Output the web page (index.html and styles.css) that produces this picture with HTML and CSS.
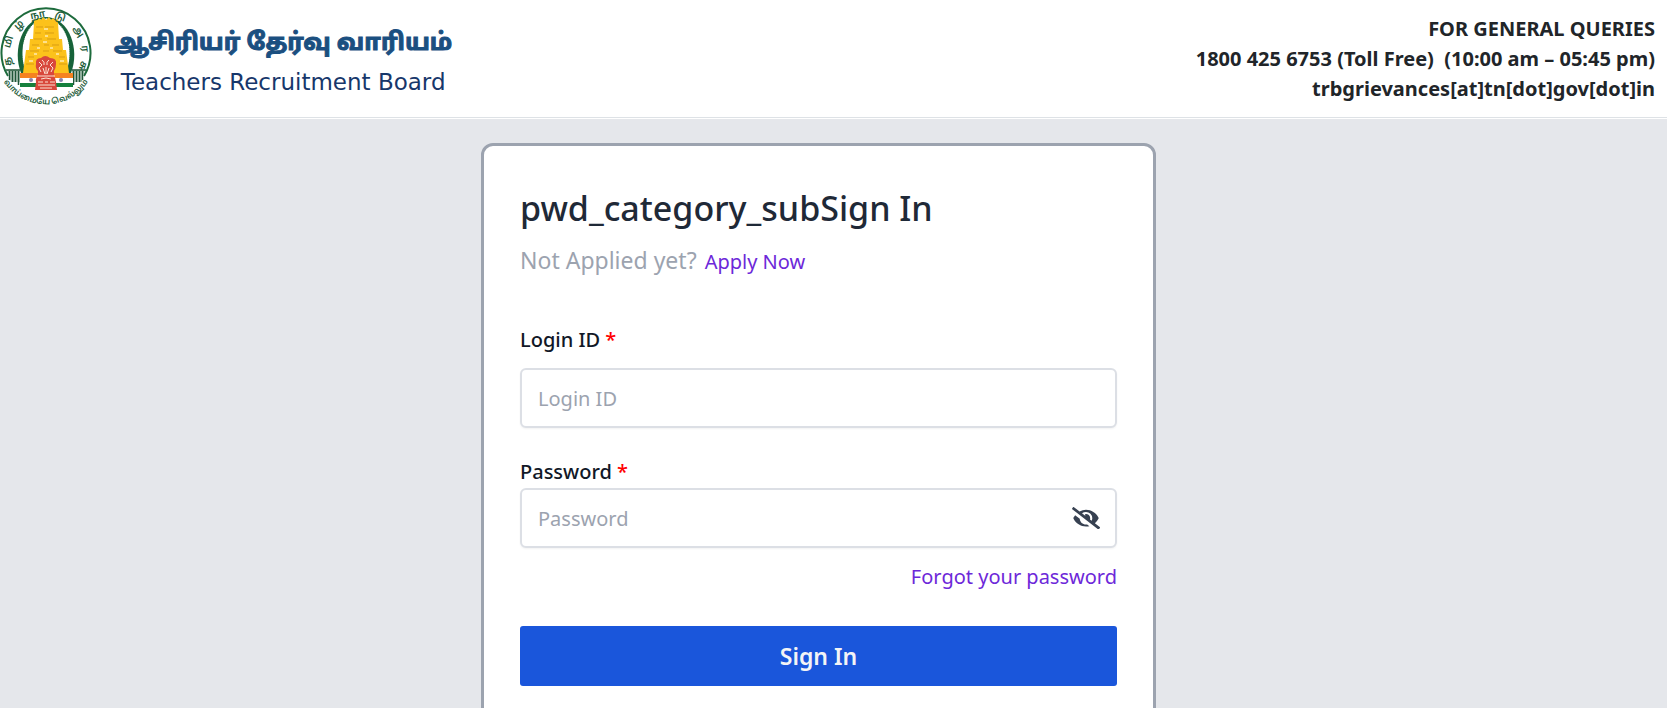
FILE: index.html
```html
<!DOCTYPE html>
<html lang="en">
<head>
  <meta charset="UTF-8" />
  <meta name="viewport" content="width=device-width, initial-scale=1.0"/>
  <title>Teachers Recruitment Board - Sign In</title>
  <link rel="stylesheet" href="styles.css">
</head>
<body>

<!-- Header -->
<header class="site-header">
  <div class="brand">
    <svg class="emblem" viewBox="0 4 92 109" role="img" aria-label="Government of Tamil Nadu emblem">
      <defs>
        <path id="arcTop" d="M12 65 A36 36 0 1 1 80 65"/>
        <path id="arcBottom" d="M2 79 A51 51 0 0 0 90 79"/>
      </defs>
      <path d="M8 76 A44.500 44.500 0 1 1 84 76" fill="none" stroke="#1d6b3c" stroke-width="2"/>
      <!-- inner ring -->
      <path d="M21 73 C12 50 22 18 46 17 C70 18 80 50 71 73 Z" fill="#17633a"/>
      <path d="M26 73 C17 50 25 20 46 18 C67 20 75 50 66 73 Z" fill="#fff"/>
      <path d="M25 73 C16 50 24 20 46 18 C68 20 76 50 67 73" fill="none" stroke="#17633a" stroke-width="2" stroke-dasharray="1 1"/>
      <!-- temple tower -->
      <path d="M34 23 v-4 l3 1 2 -2 2 2 2 -3 3 3 3 -3 2 3 2 -2 2 2 3 -1 v4 l1 16 h3 l1 11 h3 l3 23 H23 l3 -23 h3 l1 -11 h3 z" fill="#fcc21b"/>
      <path d="M36 27h7m2 0h9M35 33h6m4 0h9M34 39h8m5 0h9M32 45h7m5 0h5m3 0h7M30 51h9m4 0h6m4 0h9M28 57h6m25 0h6M26 64h8m25 0h8" stroke="#d99d12" stroke-width="1"/>
      <path d="M44 29h4M45 36h3M43 42h4M37 48h3M50 48h3M34 54h3M56 54h3M29 61h4M60 61h4" stroke="#fff" stroke-width="1"/>
      <!-- side walls -->
      <path d="M7 70h13v12h-9zM72 70h13l-4 12h-9z" fill="#b8cdbf"/>
      <path d="M6 70h14M72 70h14M9.500 71v9M12.500 71v11M15.500 71v11M18.500 71v14M73.500 71v14M76.500 71v11M79.500 71v11M82.500 71v9" stroke="#1f5638" stroke-width="1.500" fill="none"/>
      <!-- flag -->
      <path d="M20 73h53v5H20z" fill="#f58220"/>
      <path d="M20 78h53v5H20z" fill="#fff"/>
      <path d="M20 83h53v4H20z" fill="#15803d"/>
      <circle cx="31" cy="80" r="2" fill="#8580ad"/>
      <circle cx="61" cy="80" r="2" fill="#8580ad"/>
      <!-- lion capital -->
      <path d="M41 58 q4 -4 9 0 q7 0 6 6 q0 4 -2 7 v4 h-1 q3 3 3 7 l1 8 H35 l1 -8 q-1 -4 3 -7 h-1 v-4 q-3 -3 -2 -7 q-1 -6 5 -6z" fill="#d8483c"/>
      <path d="M42 60q3 2 2 5M49 60q-3 2 -2 5M39 62l3 3-3 3 2 4M53 62l-3 3 3 3-2 4M46 67v7M43 68l2 6M49 68l-2 6M37 76h18M41 79q5 -2 10 0M38 82h5m2 0h3m2 0h5M38 85h17M40 88h12" stroke="#fbe3d4" stroke-width="1" fill="none"/>
      <text class="emblem-top"><textPath href="#arcTop">த   மி   ழ்   நா   டு    அ   ர   சு</textPath></text>
      <text class="emblem-bottom"><textPath href="#arcBottom" startOffset="50%" text-anchor="middle">வாய்மையே வெல்லும்</textPath></text>
    </svg>
    <div class="brand-text">
      <span class="brand-tamil" lang="ta">ஆசிரியர் தேர்வு வாரியம்</span>
      <span class="brand-english">Teachers Recruitment Board</span>
    </div>
  </div>
  <div class="queries">
    <p>FOR GENERAL QUERIES</p>
    <p>1800 425 6753 (Toll Free)&nbsp; (10:00 am – 05:45 pm)</p>
    <p>trbgrievances[at]tn[dot]gov[dot]in</p>
  </div>
</header>

<!-- Login -->
<main class="page">
  <form class="card">
    <h1>pwd_category_subSign In</h1>
    <p class="apply">Not Applied yet? <a href="#">Apply Now</a></p>

    <div class="field field-login">
      <label for="loginId">Login ID <span class="required">*</span></label>
      <input type="text" id="loginId" placeholder="Login ID">
    </div>

    <div class="field">
      <label for="password">Password <span class="required">*</span></label>
      <div class="password-box">
        <input type="password" id="password" placeholder="Password">
        <button type="button" class="toggle" aria-label="Show password">
          <svg viewBox="0 0 640 512" fill="currentColor">
            <path d="M320 400c-75.870 0-137.250-58.710-142.900-133.110L72.200 185.820c-13.790 17.300-26.480 35.590-36.720 55.590a32.350 32.350 0 0 0 0 29.190C89.710 376.410 197.070 448 320 448c26.910 0 52.870-4 77.890-10.460L346 397.390a144.130 144.130 0 0 1-26 2.610zm313.820 58.100l-110.550-85.440a331.250 331.250 0 0 0 81.250-102.070 32.350 32.350 0 0 0 0-29.190C550.290 135.590 442.930 64 320 64a308.150 308.150 0 0 0-147.320 37.700L45.460 3.370A16 16 0 0 0 23 6.180L3.370 31.450A16 16 0 0 0 6.180 53.900l588.360 454.730a16 16 0 0 0 22.460-2.810l19.640-25.270a16 16 0 0 0-2.820-22.450zm-183.720-142l-39.300-30.380A94.750 94.750 0 0 0 416 256a94.760 94.760 0 0 0-121.310-92.210A47.650 47.650 0 0 1 304 192a46.640 46.640 0 0 1-1.540 10l-73.610-56.890A142.310 142.310 0 0 1 320 112a143.920 143.920 0 0 1 144 144c0 21.630-5.290 41.790-13.900 60.110z"/>
          </svg>
        </button>
      </div>
    </div>

    <a class="forgot" href="#">Forgot your password</a>
    <button type="submit" class="submit">Sign In</button>
  </form>
</main>

</body>
</html>
```
FILE: styles.css
```css
* {
  box-sizing: border-box;
}

body {
  margin: 0;
  min-height: 100vh;
  background: #e5e7eb;
  font-family: "Noto Sans", "Open Sans", sans-serif;
  font-size: 20px;
  line-height: 30px;
  color: #212529;
  overflow-x: hidden;
}

h1,
p {
  margin: 0;
}

a {
  color: #6d28d9;
  text-decoration: none;
}

/* Header */
.site-header {
  display: flex;
  justify-content: space-between;
  align-items: center;
  padding: 4px 12px 4px 0;
  background: #fff;
  border-bottom: 1px solid #dee2e6;
  box-shadow: 0 1px #fff;
}

.brand {
  display: flex;
  align-items: center;
  gap: 22px;
}

.emblem {
  width: 92px;
  height: 109px;
}

.emblem-top,
.emblem-bottom {
  font-family: "Noto Sans Tamil", "Noto Sans", sans-serif;
  fill: #1d5c3a;
}

.emblem-top {
  font-size: 10px;
  font-weight: 600;
  white-space: pre;
}

.emblem-bottom {
  font-size: 8px;
  font-weight: 600;
}

.brand-text {
  display: flex;
  flex-direction: column;
  align-items: center;
  padding-top: 6px;
}

.brand-tamil {
  font-family: "Noto Sans Tamil", "Noto Sans", sans-serif;
  font-size: 24px;
  font-weight: 700;
  line-height: 40px;
  color: #1b4f80;
  -webkit-text-stroke: 1px #1b4f80;
}

.brand-english {
  font-family: "DejaVu Sans", sans-serif;
  font-size: 23px;
  line-height: 36px;
  color: #17376b;
}

.queries {
  font-weight: 700;
  text-align: right;
}

/* Login card */
.page {
  display: flex;
  justify-content: center;
  padding: 25px 30px 24px 0;
}

.card {
  display: flex;
  flex-direction: column;
  width: 100%;
  max-width: 675px;
  padding: 36px 36px 48px;
  background: #fff;
  border: 3px solid #9ca3af;
  border-radius: 12px;
}

h1 {
  font-size: 34px;
  font-weight: 500;
  line-height: 52px;
  color: #1f2937;
}

.apply {
  display: flex;
  align-items: baseline;
  gap: 8px;
  margin-bottom: 36px;
  font-size: 23px;
  line-height: 52px;
  color: #9ca3af;
}

.apply a {
  font-size: 20px;
}

.field {
  display: flex;
  flex-direction: column;
}

.field-login {
  gap: 12px;
  margin-bottom: 28px;
}

label {
  font-weight: 500;
  line-height: 32px;
  color: #111827;
}

.required {
  color: #f00;
}

input {
  width: 100%;
  height: 60px;
  padding: 0 16px;
  background: #fff;
  border: 2px solid #dcdfe5;
  border-radius: 6px;
  box-shadow: 0 1px 2px rgba(0, 0, 0, 0.05);
  font: inherit;
  color: #111827;
}

input::placeholder {
  color: #9ca3af;
  opacity: 1;
}

.password-box {
  position: relative;
}

.toggle {
  position: absolute;
  top: 0;
  right: 17px;
  display: flex;
  align-items: center;
  height: 60px;
  padding: 0;
  background: none;
  border: none;
  color: #374151;
  cursor: pointer;
}

.toggle svg {
  width: 28px;
}

.forgot {
  align-self: flex-end;
  margin: 14px 0 34px;
}

.submit {
  height: 60px;
  background: #1a56db;
  border: none;
  border-radius: 3px;
  font: inherit;
  font-size: 23px;
  font-weight: 600;
  color: #f3f4f6;
  cursor: pointer;
}
```
